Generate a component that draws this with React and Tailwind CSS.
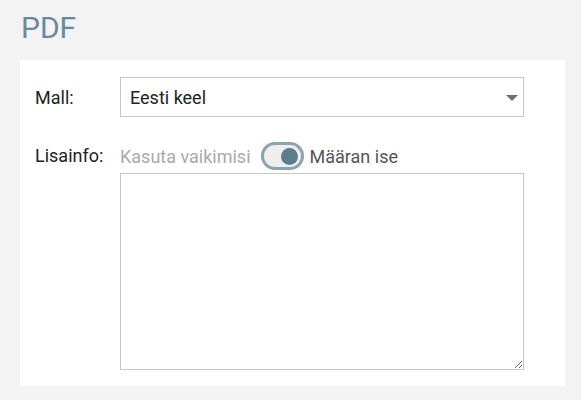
import React, { useState } from 'react';

export default function App() {
  const [custom, setCustom] = useState(true);

  return (
    <div className="min-h-[400px] bg-[#f3f3f3] font-['Roboto',sans-serif] text-[#222]">
      <h1 className="px-[21px] pt-[8px] h-[60px] text-[30px] leading-[40px] text-[#678aa0]">PDF</h1>

      <div className="ml-[20px] w-[545px] h-[326px] bg-white pl-[15px] pt-[17px]">
        {/* Mall */}
        <div className="flex items-center">
          <label className="w-[85px] text-[18px]">Mall:</label>
          <div className="relative w-[404px] h-[40px] border border-[#c8c8c8] flex items-center pl-[9px] text-[18px]">
            Eesti keel
            <span className="absolute right-[5px] top-[17px] w-0 h-0 border-l-[6px] border-r-[6px] border-t-[6px] border-l-transparent border-r-transparent border-t-[#6e6e6e]" />
          </div>
        </div>

        {/* Lisainfo */}
        <div className="flex mt-[25px]">
          <label className="w-[85px] text-[18px] leading-[28px]">Lisainfo:</label>
          <div>
            <div className="flex items-center h-[28px] text-[18px]">
              <span className="text-[#aaa]">Kasuta vaikimisi</span>
              <button
                onClick={() => setCustom(!custom)}
                className="ml-[10px] mr-[6px] w-[43px] h-[28px] rounded-full border-[3px] border-[#8ea3ae] bg-[#eeeeee] flex items-center px-[3px]"
              >
                <span className={`w-[17px] h-[17px] rounded-full bg-[#5b7d8c] ${custom ? 'ml-auto' : ''}`} />
              </button>
              <span className="text-[#555]">Määran ise</span>
            </div>
            <textarea className="block mt-[3px] w-[404px] h-[197px] border border-[#c8c8c8] outline-none resize" />
          </div>
        </div>
      </div>
    </div>
  );
}
